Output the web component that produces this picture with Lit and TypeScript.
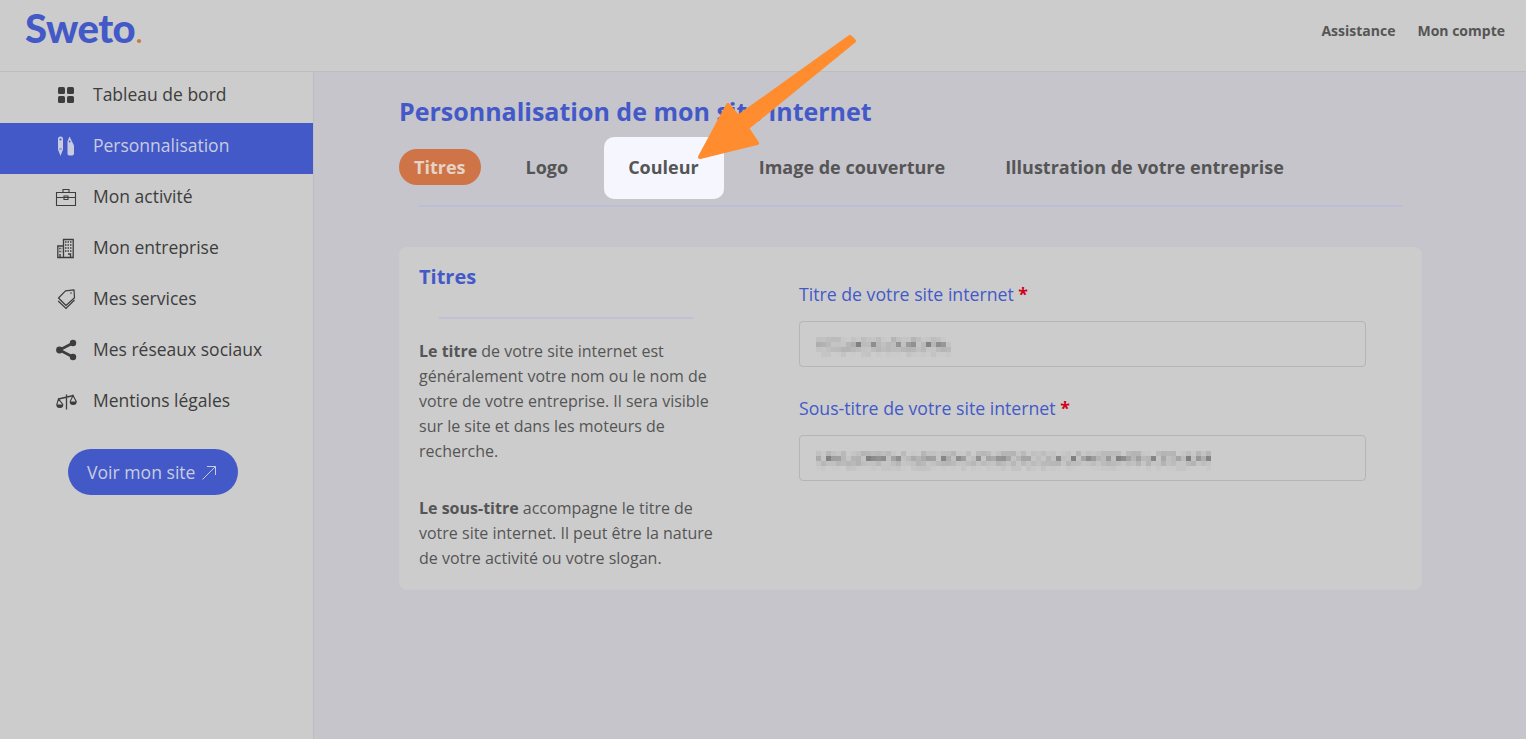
import { LitElement, html, css, svg } from "lit";
import { customElement } from "lit/decorators.js";

const NAV = [
  ["Tableau de bord", "grid"],
  ["Personnalisation", "pens"],
  ["Mon activité", "case"],
  ["Mon entreprise", "building"],
  ["Mes services", "tags"],
  ["Mes réseaux sociaux", "share"],
  ["Mentions légales", "scale"],
];

const ICONS: Record<string, unknown> = {
  grid: svg`<rect x="3" y="3" width="7" height="7" rx="1.600" fill="currentColor"/><rect x="12" y="3" width="7" height="7" rx="1.600" fill="currentColor"/><rect x="3" y="12" width="7" height="7" rx="1.600" fill="currentColor"/><rect x="12" y="12" width="7" height="7" rx="1.600" fill="currentColor"/>`,
  pens: svg`<path d="M3 4Q3 1.500 5.500 1.500T8 4V14.500L5.500 21 3 14.500z" fill="currentColor"/><circle cx="5.500" cy="4.500" r="1.100" fill="#4359c8"/><path d="M4 14h3" stroke="#4359c8" stroke-width=".7"/><path d="M14.500 1.500l3 6 1.500 3V18.500q0 2-2 2h-3q-1.500 0-1.500-2V6.500z" fill="currentColor"/><circle cx="14.700" cy="6.500" r=".9" fill="#4359c8"/>`,
  case: svg`<path d="M1.500 6.500h19v13h-19z M8 6.500V3.500h6v3 M1.500 11.500h19 M9 10h4v3.500H9z" fill="none" stroke="currentColor" stroke-width="1.100"/>`,
  building: svg`<path d="M2.800 20.500V9H8.500V2.500h9.700v18z M8.500 9v11.500" fill="none" stroke="currentColor" stroke-width="1.300"/><path d="M4.200 11.500h3M4.200 14.500h3M10 5h7M10 8h7M10 11h7M10 14h7" stroke="currentColor" stroke-width="1.500" stroke-dasharray="1.500 1"/><path d="M5 17v3.500M13 17h2.500v3.500" fill="none" stroke="currentColor" stroke-width="1.400"/>`,
  tags: svg`<path d="M10.500 2.800l8.500-1 .5 8L11 17.500 3.500 10z" fill="none" stroke="currentColor" stroke-width="1.200" stroke-linejoin="round"/><path d="M3.200 13l7.800 7.500 8.500-8.500" fill="none" stroke="currentColor" stroke-width="1.200"/><circle cx="16" cy="5" r=".8" fill="currentColor"/>`,
  share: svg`<circle cx="18" cy="4" r="3.200" fill="currentColor"/><circle cx="18" cy="18" r="3.200" fill="currentColor"/><circle cx="4.500" cy="11" r="3.400" fill="currentColor"/><path d="M18 4L4.500 11 18 18" fill="none" stroke="currentColor" stroke-width="2.600"/>`,
  scale: svg`<path d="M11.500 4.500V19.500M3.500 9l15-3.500" fill="none" stroke="currentColor" stroke-width="1.300"/><path d="M3.500 9L1.800 14.500a3 3 0 0 0 6 0z M18 5.500l-2.800 6a3 3 0 0 0 6 0z" fill="none" stroke="currentColor" stroke-width="1.100"/><path d="M15.200 11.500a3 3 0 0 0 6 0zM1.800 14.500a3 3 0 0 0 6 0z" fill="currentColor"/>`,
};

/* deterministic pixel mosaic standing in for the redacted field values */
function mosaic(width: number, seed: number) {
  const cols = Math.floor(width / 5);
  let s = seed;
  const cells = [];
  for (let c = 0; c < cols; c++) {
    for (let r = 0; r < 4; r++) {
      s = (s * 9301 + 49297) % 233280;
      const v = s / 233280;
      const op = [v * 0.2, 0.06 + v * v * 0.6, 0.05 + v * 0.16, v * v * 0.08][r];
      cells.push(svg`<rect x=${c * 5} y=${r * 5} width="5" height="5" fill="#555" opacity=${op.toFixed(2)}/>`);
    }
  }
  return html`<svg class="mosaic" width=${cols * 5} height="20" viewBox="0 0 ${cols * 5} 20">${cells}</svg>`;
}

@customElement("app-root")
export class AppRoot extends LitElement {
  static styles = css`
    :host { display: block; width: 1526px; height: 739px; overflow: hidden; position: relative; font-family: "Open Sans", sans-serif; color: #3d3d3d; background: #c6c5cc; }
    .top { height: 71px; background: #cccccc; border-bottom: 1px solid #bdbdbf; display: flex; align-items: center; justify-content: space-between; padding: 0 21px 0 25px; box-sizing: content-box; }
    .logo { font-family: "Lato", sans-serif; font-weight: 900; font-size: 40px; color: #4359c8; letter-spacing: -0.5px; margin-top: -10px; line-height: 40px; }
    .logo span { color: #cf7446; font-size: 24px; margin-left: 1px; }
    .top-links { display: flex; gap: 22px; font-size: 14px; font-weight: 700; color: #555; margin-top: -11px; }
    .body { display: flex; height: 667px; }
    .side { width: 313px; background: #cccccc; border-right: 1px solid #bdbcc3; flex: none; }
    .item { height: 51px; display: flex; align-items: center; padding-left: 55px; padding-bottom: 6px; box-sizing: border-box; font-size: 17.500px; font-weight: 500; color: #3d3d3d; gap: 16px; }
    .item span { margin-bottom: 2px; }
    .item svg { width: 22px; height: 22px; flex: none; }
    .item.on { background: #4359c8; color: #c9cce0; }
    .cta { display: flex; align-items: center; gap: 7px; margin: 20px 0 0 68px; height: 46px; width: 170px; box-sizing: border-box; padding-left: 19px; background: #4359c8; color: #c9cce0; border-radius: 23px; font-size: 17.600px; }
    .main { flex: 1; padding: 21px 104px 0 85px; }
    h1 { margin: 0; font-size: 25px; line-height: 36px; font-weight: 700; color: #4359c8; }
    .tabs { display: flex; gap: 30px; margin-top: 20px; }
    .tab { position: relative; padding: 0 15px; height: 36px; line-height: 36px; font-size: 18px; font-weight: 700; color: #555; border-radius: 18px; white-space: nowrap; z-index: 0; }
    .tab.on { background: #cf7446; color: #e6d3c8; }
    .tab.hi::before { content: ""; position: absolute; inset: -12px -10px -14px -9px; background: #f6f7fe; border-radius: 10px; z-index: -1; }
    .rule { height: 2px; background: #bcbed6; margin: 20px 19px 0 20px; width: 984px; }
    .card { margin-top: 40px; height: 343px; background: #cccccc; border-radius: 8px; display: flex; box-sizing: border-box; }
    .info { width: 400px; padding: 13px 0 0 20px; box-sizing: border-box; flex: none; }
    h2 { margin: 0; font-size: 20px; line-height: 34px; font-weight: 700; color: #4359c8; }
    .sep { height: 2px; background: #bfc0d0; width: 254px; margin: 23px 0 20px 20px; }
    p { margin: 0 0 32px; width: 300px; font-size: 16px; line-height: 25px; color: #555; }
    b { font-weight: 700; }
    .form { padding-top: 35px; width: 567px; }
    label { display: block; font-size: 17.700px; line-height: 25px; font-weight: 500; color: #4359c8; margin-bottom: 14px; }
    label i { color: #d0021b; font-style: normal; font-weight: 700; }
    .input { height: 46px; border: 1px solid #b5b5b5; border-radius: 4px; box-sizing: border-box; display: flex; align-items: center; padding: 6px 0 0 16px; margin-bottom: 29px; background: #cccccc; }
    .mosaic { display: block; }
    .arrow { position: absolute; left: 0; top: 0; pointer-events: none; }
  `;

  render() {
    return html`
      <div class="top">
        <div class="logo">Sweto<span>.</span></div>
        <div class="top-links"><span>Assistance</span><span>Mon compte</span></div>
      </div>
      <div class="body">
        <nav class="side">
          ${NAV.map(([t, i], n) => html`<div class="item ${n === 1 ? "on" : ""}"><svg viewBox="0 0 22 22">${ICONS[i]}</svg><span>${t}</span></div>`)}
          <div class="cta">Voir mon site <svg width="14" height="15" viewBox="0 0 14 15"><path d="M.5 14.500L13.500 1.500M5 1.500h8.500V10" fill="none" stroke="currentColor"/></svg></div>
        </nav>
        <main class="main">
          <h1>Personnalisation de mon site internet</h1>
          <div class="tabs">
            <div class="tab on">Titres</div>
            <div class="tab">Logo</div>
            <div class="tab hi">Couleur</div>
            <div class="tab">Image de couverture</div>
            <div class="tab">Illustration de votre entreprise</div>
          </div>
          <div class="rule"></div>
          <section class="card">
            <div class="info">
              <h2>Titres</h2>
              <div class="sep"></div>
              <p><b>Le titre</b> de votre site internet est généralement votre nom ou le nom de votre de votre entreprise. Il sera visible sur le site et dans les moteurs de recherche.</p>
              <p><b>Le sous-titre</b> accompagne le titre de votre site internet. Il peut être la nature de votre activité ou votre slogan.</p>
            </div>
            <div class="form">
              <label>Titre de votre site internet <i>*</i></label>
              <div class="input">${mosaic(135, 7)}</div>
              <label>Sous-titre de votre site internet <i>*</i></label>
              <div class="input">${mosaic(395, 31)}</div>
            </div>
          </section>
        </main>
      </div>
      <svg class="arrow" width="1526" height="739" viewBox="0 0 1526 739"><path d="M850 37L854 41L747 128L757 143L700 157L728 105L738 117Z" fill="#ff8c2e" stroke="#ff8c2e" stroke-width="4" stroke-linejoin="round"/></svg>
    `;
  }
}
